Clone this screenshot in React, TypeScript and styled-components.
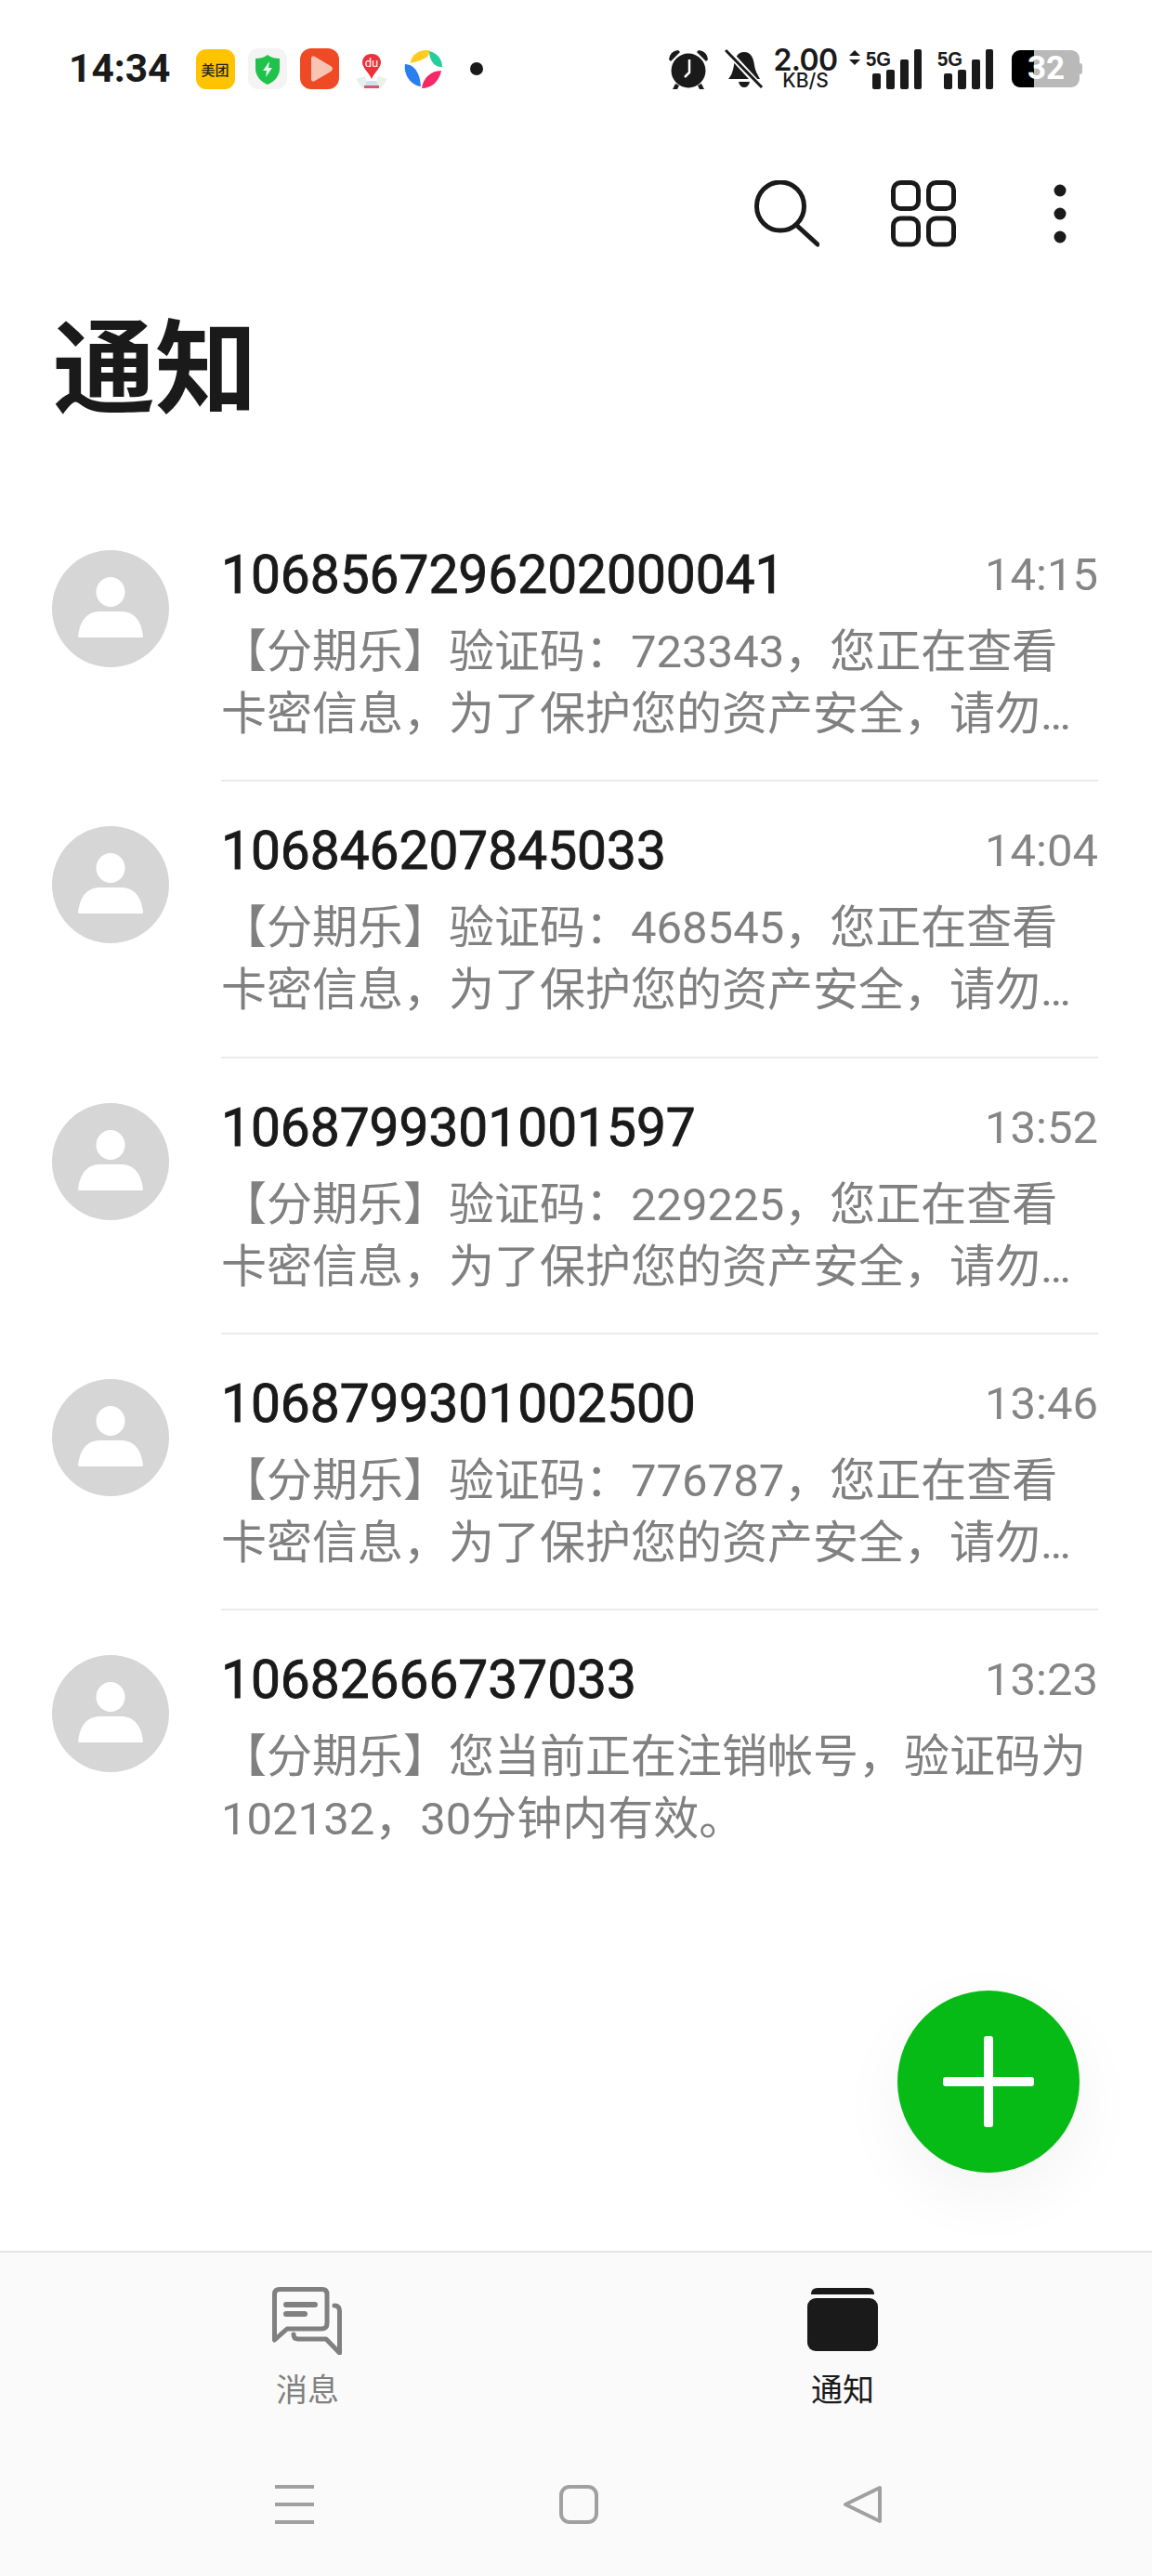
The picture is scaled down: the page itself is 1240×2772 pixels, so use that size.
import React from "react";
import styled, { createGlobalStyle } from "styled-components";

const Global = createGlobalStyle`
  html, body { margin: 0; padding: 0; background: #fff; }
  * { box-sizing: border-box; }
`;

const CJK = `Roboto, "Noto Sans CJK SC", sans-serif`;

const Page = styled.div`
  position: relative;
  width: 1240px;
  height: 2772px;
  display: flex;
  flex-direction: column;
  background: #fff;
  font-family: ${CJK};
  overflow: hidden;
`;

const StatusBar = styled.div`
  height: 148px;
  flex: none;
  padding: 0 75px 0 74px;
  display: flex;
  align-items: center;
  justify-content: space-between;
`;
const StatusLeft = styled.div`
  display: flex;
  align-items: center;
  gap: 14px;
`;
const StatusRight = styled.div`
  display: flex;
  align-items: center;
`;
const Clock = styled.div`
  font-size: 42.5px;
  font-weight: 700;
  line-height: 50px;
  color: #1a1a1a;
  margin-right: 13px;
`;
const Meituan = styled.div`
  width: 42px;
  height: 43px;
  border-radius: 11px;
  background: #ffc300;
  color: #222;
  font-family: "Noto Sans CJK SC", sans-serif;
  font-size: 15px;
  font-weight: 500;
  display: flex;
  align-items: center;
  justify-content: center;
  white-space: nowrap;
`;
const Dot = styled.div`
  width: 14px;
  height: 14px;
  border-radius: 50%;
  background: #1a1a1a;
  margin-left: 15px;
`;
const StatusIcon = styled.svg<{ $after?: number }>`
  display: block;
  flex: none;
  margin-right: ${(p) => p.$after ?? 0}px;
`;
const NetSpeed = styled.div`
  width: 68px;
  margin-right: 13px;
  display: flex;
  flex-direction: column;
  align-items: center;
  color: #1a1a1a;
  font-family: Inter, Roboto, sans-serif;
`;
const NetValue = styled.div`
  font-size: 32px;
  font-weight: 600;
  line-height: 25px;
  letter-spacing: -0.6px;
`;
const NetUnit = styled.div`
  font-size: 21px;
  font-weight: 500;
  line-height: 20px;
`;
const Battery = styled.div`
  position: relative;
  width: 76px;
  height: 40px;
  margin-left: 20px;
`;
const BatteryBody = styled.div`
  position: absolute;
  left: 0;
  top: 0;
  width: 73px;
  height: 40px;
  border-radius: 9px;
  overflow: hidden;
  background: #b9b9b9;
  &::before {
    content: "";
    position: absolute;
    left: 0;
    top: 0;
    bottom: 0;
    width: 24px;
    background: #000;
  }
`;
const BatteryNub = styled.div`
  position: absolute;
  right: 0;
  top: 14px;
  width: 4px;
  height: 12px;
  border-radius: 0 3px 3px 0;
  background: #b9b9b9;
`;
const BatteryLabel = styled.div`
  position: absolute;
  left: 17px;
  top: 0;
  width: 40px;
  text-align: center;
  font-size: 35px;
  line-height: 40px;
  font-weight: 700;
  color: #fff;
  font-family: Roboto, sans-serif;
`;

const Toolbar = styled.div`
  height: 164px;
  flex: none;
  padding-right: 64px;
  display: flex;
  align-items: center;
  justify-content: flex-end;
  gap: 77px;
`;
const ToolIcon = styled.svg`
  display: block;
  width: 70px;
  height: 72px;
`;

const Title = styled.h1`
  margin: 0;
  padding: 0 0 80px 57px;
  flex: none;
  font-family: "Noto Sans CJK SC", sans-serif;
  font-size: 110px;
  line-height: 152px;
  font-weight: 700;
  color: #1a1a1a;
`;

const List = styled.div`
  flex: 1;
  min-height: 0;
`;
const Row = styled.div`
  height: 297.25px;
  padding: 0 58px 0 56px;
  display: grid;
  grid-template-columns: 126px 1fr;
  column-gap: 56px;
`;
const Avatar = styled.svg`
  display: block;
  width: 126px;
  height: 126px;
  margin-top: 48px;
`;
const RowBody = styled.div<{ $last?: boolean }>`
  padding-top: 40px;
  border-bottom: ${(p) => (p.$last ? "none" : "2px solid #ebebeb")};
`;
const RowHead = styled.div`
  height: 70px;
  display: flex;
  align-items: center;
  justify-content: space-between;
`;
const Sender = styled.div`
  font-size: 56.8px;
  font-weight: 400;
  line-height: 70px;
  color: #1a1a1a;
  -webkit-text-stroke: 0.9px #1a1a1a;
`;
const Time = styled.div`
  font-size: 49px;
  line-height: 70px;
  color: #858585;
`;
const Preview = styled.div`
  margin-top: 14px;
  font-size: 49px;
  line-height: 67px;
  color: #808080;
  height: 134px;
  overflow: hidden;
`;

const Fab = styled.div`
  position: absolute;
  left: 966px;
  top: 2142px;
  width: 196px;
  height: 196px;
  border-radius: 50%;
  background: #06bb15;
  box-shadow: 0 24px 70px rgba(0, 0, 0, 0.05);
  display: flex;
  align-items: center;
  justify-content: center;
`;
const FabIcon = styled.svg`
  display: block;
  width: 98px;
  height: 98px;
`;

const Bottom = styled.div`
  height: 350px;
  flex: none;
  background: #fafafa;
  border-top: 2px solid #e4e4e4;
`;
const Tabs = styled.div`
  display: flex;
  padding: 37px 0 0 231px;
  gap: 376px;
`;
const Tab = styled.div`
  width: 200px;
  display: flex;
  flex-direction: column;
  align-items: center;
`;
const TabIcon = styled.svg`
  display: block;
  width: 76px;
  height: 73px;
`;
const TabLabel = styled.div<{ $active?: boolean }>`
  margin-top: 16px;
  font-family: "Noto Sans CJK SC", sans-serif;
  font-size: 34px;
  line-height: 40px;
  color: ${(p) => (p.$active ? "#1a1a1a" : "#808080")};
`;
const SysNav = styled.div`
  display: flex;
  align-items: center;
  margin-top: 84px;
  padding-left: 296px;
  gap: 264px;
`;

const BaiduPin = () => (
  <StatusIcon width="42" height="44" viewBox="0 0 42 44">
    <path d="M4 33 L14 30 L18 43 H11 Z" fill="#e4f1ee" />
    <path d="M38 33 L28 30 L24 43 H31 Z" fill="#e8f4e4" />
    <path d="M16 35 H26 L29 43 H13 Z" fill="#cfe0f2" />
    <rect x="13" y="40" width="16" height="3" fill="#d65a6a" />
    <path d="M21 6 C14 6 11 11 11 15 C11 21 18 26 21 33 C24 26 31 21 31 15 C31 11 28 6 21 6 Z" fill="#ee3038" />
    <text x="21" y="20" textAnchor="middle" fontSize="13" fontFamily="Roboto, sans-serif" fill="#fff">du</text>
  </StatusIcon>
);

const SignalIcon = ({ arrows }: { arrows?: boolean }) => {
  const o = arrows ? 25 : 7;
  return (
    <StatusIcon width={arrows ? 78 : 60} height="44" viewBox={`0 0 ${arrows ? 78 : 60} 44`} $after={arrows ? 17 : 0}>
      {arrows && (
        <>
          <path d="M6 2 L12 8 H0 Z" fill="#1a1a1a" />
          <path d="M6 18 L12 12 H0 Z" fill="#1a1a1a" />
        </>
      )}
      <text
        x={arrows ? 18 : 0}
        y="19"
        fontSize="22"
        fontWeight="700"
        fontFamily="'Liberation Sans', sans-serif"
        fill="#1a1a1a"
        textLength="27"
        lengthAdjust="spacingAndGlyphs"
      >
        5G
      </text>
      <rect x={o + 0} y="27" width="9" height="17" rx="2" fill="#1a1a1a" />
      <rect x={o + 15} y="23" width="9" height="21" rx="2" fill="#1a1a1a" />
      <rect x={o + 30} y="12" width="9" height="32" rx="2" fill="#1a1a1a" />
      <rect x={o + 45} y="1" width="8" height="43" rx="2" fill="#1a1a1a" />
    </StatusIcon>
  );
};

type Msg = { sender: string; time: string; text: string };
const tail = "您正在查看卡密信息，为了保护您的资产安全，请勿…";
const messages: Msg[] = [
  { sender: "1068567296202000041", time: "14:15", text: `【分期乐】验证码：723343，${tail}` },
  { sender: "106846207845033", time: "14:04", text: `【分期乐】验证码：468545，${tail}` },
  { sender: "1068799301001597", time: "13:52", text: `【分期乐】验证码：229225，${tail}` },
  { sender: "1068799301002500", time: "13:46", text: `【分期乐】验证码：776787，${tail}` },
  { sender: "10682666737033", time: "13:23", text: "【分期乐】您当前正在注销帐号，验证码为102132，30分钟内有效。" },
];

export default function App() {
  return (
    <Page>
      <Global />
      <StatusBar>
        <StatusLeft>
          <Clock>14:34</Clock>
          <Meituan>美团</Meituan>
          <StatusIcon width="42" height="44" viewBox="0 0 42 44">
            <rect width="42" height="44" rx="11" fill="#f4f4f5" />
            <path d="M21 7 C25 10 30 11 34 11 V22 C34 30 28 36 21 39 C14 36 8 30 8 22 V11 C12 11 17 10 21 7 Z" fill="#1fc24a" />
            <path d="M23 14 L16 24 H20 L19 31 L26 21 H22 Z" fill="#fff" opacity="0.9" />
          </StatusIcon>
          <StatusIcon width="42" height="44" viewBox="0 0 42 44">
            <rect width="42" height="44" rx="12" fill="#ee4a25" />
            <path d="M12 11 Q12 7 16 9 L33 19 Q37 22 33 25 L16 35 Q12 37 12 33 Z" fill="#f9c4b4" />
          </StatusIcon>
          <BaiduPin />
          <StatusIcon width="42" height="44" viewBox="0 0 42 44">
            <path d="M7 16 C7 7 16 1 27 2 Q28 9 20 12 C15 14 10 15 7 16 Z" fill="#ffcb1f" />
            <path d="M27 3 C36 5 41 12 41 20 C33 21 27 13 27 3 Z" fill="#23cf9b" />
            <path d="M1 17 C10 17 17 25 18 41 C8 40 -1 29 1 17 Z" fill="#2a7ff0" />
            <path d="M40 24 C38 35 30 43 19 43 C20 33 28 24 40 24 Z" fill="#f42a66" />
          </StatusIcon>
          <Dot />
        </StatusLeft>
        <StatusRight>
          <StatusIcon width="44" height="44" viewBox="0 0 44 44" $after={17}>
            <circle cx="22" cy="24" r="18.5" fill="#1a1a1a" />
            <path d="M1 12 Q2 3 11 2 L13 4 L3 14 Z M43 12 Q42 3 33 2 L31 4 L41 14 Z" fill="#1a1a1a" />
            <path d="M8 38 L5 44 H10 L12 40 Z M36 38 L39 44 H34 L32 40 Z" fill="#1a1a1a" />
            <path d="M23 12 V26 L18 31" stroke="#fff" strokeWidth="2.5" fill="none" />
          </StatusIcon>
          <StatusIcon width="42" height="44" viewBox="0 0 42 44" $after={11}>
            <path d="M21 4 C28 4 31 10 32 18 C33 25 36 29 38 33 H4 C8 28 9 24 10 18 C11 10 14 4 21 4 Z" fill="#1a1a1a" />
            <path d="M15 36 H27 C26 40 24 42 21 42 C18 42 16 40 15 36 Z" fill="#1a1a1a" />
            <path d="M3 3 L38 41" stroke="#fff" strokeWidth="7" />
            <path d="M1 2 L40 42" stroke="#1a1a1a" strokeWidth="3" />
          </StatusIcon>
          <NetSpeed>
            <NetValue>2.00</NetValue>
            <NetUnit>KB/S</NetUnit>
          </NetSpeed>
          <SignalIcon arrows />
          <SignalIcon />
          <Battery>
            <BatteryBody />
            <BatteryNub />
            <BatteryLabel>32</BatteryLabel>
          </Battery>
        </StatusRight>
      </StatusBar>

      <Toolbar>
        <ToolIcon viewBox="0 0 70 72" fill="none" stroke="#1a1a1a" strokeWidth="5" strokeLinecap="round">
          <ellipse cx="28" cy="28" rx="25.5" ry="26" />
          <path d="M45 48 L68 69" />
        </ToolIcon>
        <ToolIcon viewBox="0 0 70 72" fill="none" stroke="#1a1a1a" strokeWidth="5">
          <rect x="2.5" y="2.5" width="27" height="28" rx="8" />
          <rect x="40.5" y="2.5" width="27" height="28" rx="8" />
          <rect x="2.5" y="41" width="27" height="28" rx="8" />
          <rect x="40.5" y="41" width="27" height="28" rx="8" />
        </ToolIcon>
        <ToolIcon viewBox="0 0 70 72" fill="#1a1a1a">
          <circle cx="35" cy="11" r="6.5" />
          <circle cx="35" cy="36" r="6.5" />
          <circle cx="35" cy="61" r="6.5" />
        </ToolIcon>
      </Toolbar>

      <Title>通知</Title>

      <List>
        {messages.map((m, i) => (
          <Row key={m.sender}>
            <Avatar viewBox="0 0 126 126">
              <circle cx="63" cy="63" r="63" fill="#d6d6d6" />
              <ellipse cx="63" cy="45" rx="15.5" ry="16" fill="#fff" />
              <path d="M28 93 C30 75 38 67 50 66 H76 C88 67 96 75 98 93 Q98 94 96 94 H30 Q28 94 28 93 Z" fill="#fff" />
            </Avatar>
            <RowBody $last={i === messages.length - 1}>
              <RowHead>
                <Sender>{m.sender}</Sender>
                <Time>{m.time}</Time>
              </RowHead>
              <Preview>{m.text}</Preview>
            </RowBody>
          </Row>
        ))}
      </List>

      <Fab>
        <FabIcon viewBox="0 0 98 98" fill="#fff">
          <rect x="0" y="44" width="98" height="10" rx="3" />
          <rect x="44" y="0" width="10" height="98" rx="3" />
        </FabIcon>
      </Fab>

      <Bottom>
        <Tabs>
          <Tab>
            <TabIcon viewBox="0 0 76 73" fill="none" stroke="#808080" strokeWidth="5" strokeLinejoin="round" strokeLinecap="round">
              <path d="M8 2.5 H54 Q59 2.5 59 8 V39 Q59 45 53 45 H16 L2.5 57 V8 Q2.5 2.5 8 2.5 Z" />
              <path d="M15 19 H46 M15 29 H35" strokeWidth="6" />
              <path d="M67 20 Q72.5 20 72.5 26 V71 L58 56 H28 Q23 56 23 51" />
            </TabIcon>
            <TabLabel>消息</TabLabel>
          </Tab>
          <Tab>
            <TabIcon viewBox="0 0 76 73" fill="#1a1a1a">
              <path d="M4 8 Q4 1 11 1 H65 Q72 1 72 8 H4 Z" />
              <rect x="0" y="12" width="76" height="57" rx="9" />
            </TabIcon>
            <TabLabel $active>通知</TabLabel>
          </Tab>
        </Tabs>
        <SysNav>
          <StatusIcon width="42" height="42" viewBox="0 0 42 42" fill="#a0a0a0">
            <rect x="0" y="0" width="42" height="4" />
            <rect x="0" y="19" width="42" height="4" />
            <rect x="0" y="38" width="42" height="4" />
          </StatusIcon>
          <StatusIcon width="42" height="42" viewBox="0 0 42 42" fill="none" stroke="#a0a0a0" strokeWidth="4">
            <rect x="2" y="2" width="38" height="38" rx="9" />
          </StatusIcon>
          <StatusIcon width="42" height="42" viewBox="0 0 42 42" fill="none" stroke="#a0a0a0" strokeWidth="4" strokeLinejoin="round">
            <path d="M39 3 V39 L2 21 Z" />
          </StatusIcon>
        </SysNav>
      </Bottom>
    </Page>
  );
}
